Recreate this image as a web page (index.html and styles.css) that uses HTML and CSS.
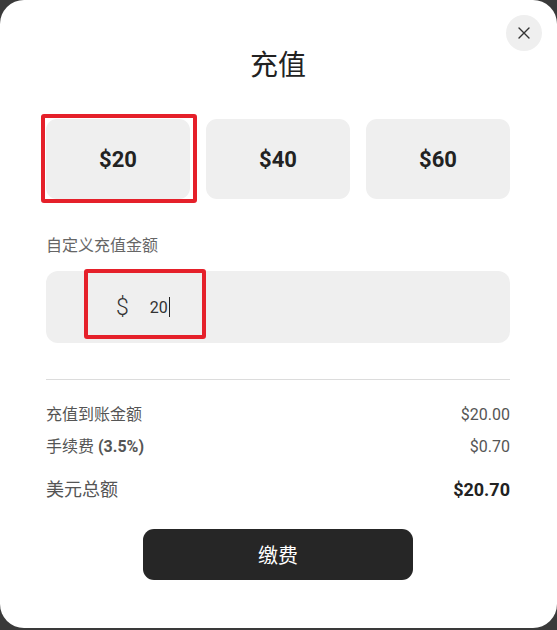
FILE: index.html
```html
<!DOCTYPE html>
<html lang="zh-CN">
<head>
<meta charset="utf-8">
<title>充值</title>
<link rel="stylesheet" href="styles.css">
</head>
<body>
<div class="modal">
  <button class="close" aria-label="关闭">
    <svg width="12" height="12" viewBox="0 0 12 12"><path d="M1 1L11 11M11 1L1 11" stroke="#333" stroke-width="1.4" stroke-linecap="round" fill="none"/></svg>
  </button>
  <h1 class="title">充值</h1>
  <div class="options">
    <div class="option selected">$20<span class="mark mark-opt"></span></div>
    <div class="option">$40</div>
    <div class="option">$60</div>
  </div>
  <div class="label">自定义充值金额</div>
  <div class="field">
    <span class="currency">$</span><span class="amount">20</span><span class="caret"></span>
    <span class="mark mark-field"></span>
  </div>
  <div class="divider"></div>
  <div class="row"><span>充值到账金额</span><span>$20.00</span></div>
  <div class="row row2"><span>手续费 <b>(3.5%)</b></span><span>$0.70</span></div>
  <div class="row total"><span>美元总额</span><span class="strong">$20.70</span></div>
  <div class="actions"><button class="pay">缴费</button></div>
</div>
</body>
</html>
```
FILE: styles.css
```css
* { box-sizing: border-box; }
html, body { margin: 0; padding: 0; }
body {
  background: #3a3a3a;
  width: 557px;
  height: 630px;
  overflow: hidden;
  font-family: Roboto, "Noto Sans CJK SC", sans-serif;
}
.modal {
  position: relative;
  width: 557px;
  height: 628px;
  background: #fff;
  border-radius: 24px;
  padding: 48px 47px 0 46px;
}
.close {
  position: absolute;
  top: 15px;
  right: 15px;
  width: 36px;
  height: 36px;
  border-radius: 50%;
  border: none;
  background: #efefef;
  padding: 0;
  display: flex;
  align-items: center;
  justify-content: center;
}
.title {
  margin: 0;
  font-size: 28px;
  line-height: 36px;
  font-weight: 400;
  color: #222;
  text-align: center;
}
.options {
  margin-top: 35px;
  display: grid;
  grid-template-columns: repeat(3, 1fr);
  gap: 16px;
}
.option {
  position: relative;
  height: 80px;
  border-radius: 11px;
  background: #efefef;
  display: flex;
  align-items: center;
  justify-content: center;
  font-size: 22px;
  font-weight: 700;
  color: #222;
}
.mark {
  position: absolute;
  border: 4px solid #e5202a;
  border-radius: 3px;
}
.mark-opt { top: -5px; left: -5px; right: -7px; bottom: -4px; }
.label {
  margin-top: 36px;
  font-size: 16px;
  line-height: 22px;
  color: #666;
}
.field {
  position: relative;
  margin-top: 14px;
  height: 72px;
  border-radius: 12px;
  background: #efefef;
  display: flex;
  align-items: center;
  padding-left: 70px;
  color: #333;
}
.currency { font-size: 23px; font-weight: 300; }
.amount { margin-left: 21px; font-size: 16px; }
.caret { width: 1.5px; height: 20px; background: #222; margin-left: 1px; }
.mark-field { top: -2px; left: 38px; width: 122px; height: 70px; }
.divider {
  margin-top: 36px;
  height: 1px;
  background: #dcdcdc;
}
.row {
  margin-top: 24px;
  display: flex;
  justify-content: space-between;
  font-size: 16px;
  line-height: 22px;
  color: #555;
}
.row b { font-weight: 700; }
.row2 { margin-top: 10px; }
.total {
  margin-top: 20px;
  font-size: 18px;
  line-height: 24px;
}
.strong { font-weight: 700; color: #222; }
.actions {
  margin-top: 27px;
  display: flex;
  justify-content: center;
}
.pay {
  width: 270px;
  height: 51px;
  border: none;
  border-radius: 11px;
  background: #262626;
  color: #fff;
  font-family: Roboto, "Noto Sans CJK SC", sans-serif;
  font-size: 20px;
}
```
